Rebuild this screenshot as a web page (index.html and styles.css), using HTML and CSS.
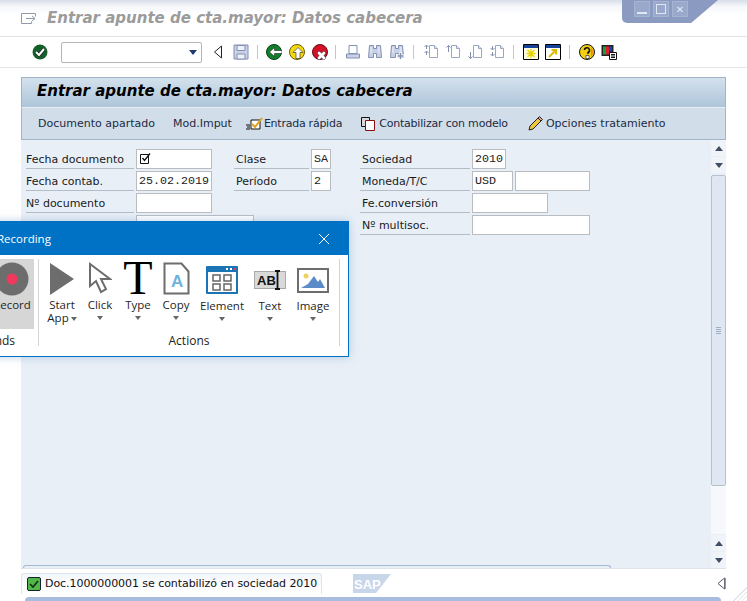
FILE: index.html
```html
<!DOCTYPE html>
<html lang="es">
<head>
    <meta charset="UTF-8">
    <meta name="viewport" content="width=device-width, initial-scale=1.0">
    <title>Entrar apunte de cta.mayor</title>
    <link rel="stylesheet" href="styles.css">
</head>
<body>
    <svg class="Hidden" width="0" height="0">
        <symbol id="page" viewBox="0 0 16 16">
            <path d="M6.500 1.500h5l3 3v9h-8z" fill="#fff" stroke="#9aa6c4"/>
            <path d="M11.500 1.500v3h3" fill="#dfe5f2" stroke="#9aa6c4"/>
        </symbol>
        <symbol id="binoc" viewBox="0 0 16 16">
            <path d="M2.500 1.500h4v3h3v-3h4l1 12h-5v-4h-3v4h-5z" fill="#c9d1e6" stroke="#8290b4"/>
            <path d="M4 3v6M12 3v6" stroke="#eef1f8"/>
        </symbol>
    </svg>

    <header class="Head">
        <svg class="Head__icon" width="16" height="12" viewBox="0 0 16 12"><path d="M.5 1.500h14M.5 1.500v10h10M10.500 11.500v-2M14.500 1.500v3M5 6.500h9l-3-2.500M14 6.500l-3 2.500" fill="none" stroke="#8f99a8"/></svg>
        <h1 class="Head__title">Entrar apunte de cta.mayor: Datos cabecera</h1>
    </header>

    <div class="Tools">
        <svg class="Tools__ico" viewBox="0 0 16 16"><circle cx="8" cy="8" r="7.500" fill="#14602a"/><path d="M4 8l3 3 5-6" fill="none" stroke="#222" stroke-width="3.500"/><path d="M4 8l3 3 5-6" fill="none" stroke="#fff" stroke-width="2"/></svg>
        <div class="Combo"><span class="Combo__arrow"></span></div>
        <svg class="Tools__nav" viewBox="0 0 10 16"><path d="M8.500 2v12L1.500 8z" fill="#fff" stroke="#222"/></svg>
        <svg class="Tools__ico Tools__ico--save" viewBox="0 0 16 16"><path d="M1 1h14v14H1z" fill="#c9d1e6" stroke="#8290b4"/><path d="M4 1.500h8v5H4zM4 10h8v5H4z" fill="#eef1f8" stroke="#8290b4"/></svg>
        <span class="Tools__sep Tools__sep--first"></span>
        <div class="Tools__group Tools__group--wide">
            <svg class="Tools__ico" viewBox="0 0 16 16"><circle cx="8" cy="8" r="7.500" fill="#10802a" stroke="#0b3d18"/><path d="M16 6.500H8.500V3.500L3.500 8l5 4.500v-3H16z" fill="#fff" stroke="#222" stroke-width=".6"/></svg>
            <svg class="Tools__ico" viewBox="0 0 16 16"><circle cx="8" cy="8" r="7.500" fill="#f6d90f" stroke="#6d5b00"/><path d="M9 3.500l5 5h-3v6H7v-6H4z" fill="#fff" stroke="#222" stroke-width=".6"/></svg>
            <svg class="Tools__ico" viewBox="0 0 16 16"><circle cx="8" cy="8" r="7.500" fill="#d3122a" stroke="#6a0a14"/><path d="M7 7l2.500 2 2.500-2 2 2-2 2.500 2 2.500-2 2-2.500-2L7 16l-2-2 2-2.500L5 9z" fill="#fff" stroke="#222" stroke-width=".5"/></svg>
        </div>
        <span class="Tools__sep Tools__sep--near"></span>
        <div class="Tools__group">
            <svg class="Tools__ico" viewBox="0 0 16 16"><path d="M4 1.500h8v8H4z" fill="#fff" stroke="#8290b4"/><path d="M1.500 10h13v4h-13z" fill="#c9d1e6" stroke="#8290b4"/></svg>
            <svg class="Tools__ico"><use href="#binoc"/></svg>
            <svg class="Tools__ico" viewBox="0 0 16 16"><use href="#binoc" width="16" height="16"/><path d="M11.500 8.500v7M8 12h7" stroke="#fff" stroke-width="3"/><path d="M11.500 9v6M8.500 12h6" stroke="#8290b4" stroke-width="1.500"/></svg>
        </div>
        <span class="Tools__sep"></span>
        <div class="Tools__group">
            <svg class="Tools__ico" viewBox="0 0 16 16"><use href="#page" width="16" height="16"/><path d="M3.500 5V1.500M1.500 3l2-2 2 2M3.500 11V7.500M1.500 9l2-2 2 2" fill="none" stroke="#8290b4"/></svg>
            <svg class="Tools__ico" viewBox="0 0 16 16"><use href="#page" width="16" height="16"/><path d="M3.500 8V1.500M1.500 3.500l2-2 2 2" fill="none" stroke="#8290b4"/></svg>
            <svg class="Tools__ico" viewBox="0 0 16 16"><use href="#page" width="16" height="16"/><path d="M3.500 8v6.500M1.500 12.500l2 2 2-2" fill="none" stroke="#8290b4"/></svg>
            <svg class="Tools__ico" viewBox="0 0 16 16"><use href="#page" width="16" height="16"/><path d="M3.500 2v3.500M1.500 4l2 2 2-2M3.500 8v3.500M1.500 10l2 2 2-2" fill="none" stroke="#8290b4"/></svg>
        </div>
        <span class="Tools__sep"></span>
        <div class="Tools__group">
            <svg class="Tools__ico" viewBox="0 0 16 16"><path d="M.5.500h15v15H.5z" fill="#fffde0" stroke="#000"/><path d="M1 1h14v3H1z" fill="#15439b"/><path d="M8 5v9M3.500 9.500h9M4.500 6l7 7M11.500 6l-7 7" stroke="#e8d400" stroke-width="1.300"/></svg>
            <svg class="Tools__ico" viewBox="0 0 16 16"><path d="M.5.500h15v15H.5z" fill="#fff" stroke="#000"/><path d="M1 1h14v3H1z" fill="#15439b"/><path d="M4 13l6-6M6.500 6H11v4.500" fill="none" stroke="#d8c000" stroke-width="2"/></svg>
        </div>
        <span class="Tools__sep"></span>
        <div class="Tools__group">
            <svg class="Tools__ico" viewBox="0 0 16 16"><circle cx="8" cy="8" r="7.500" fill="#f4d010" stroke="#111"/><path d="M12 3a7 7 0 0 1 0 10z" fill="#ee8a1c"/><path d="M5.500 6a2.500 2.500 0 1 1 3.500 2.500V10" fill="none" stroke="#111" stroke-width="1.600"/><path d="M7 11.500h3v3H7z" fill="#fff" stroke="#111" stroke-width=".6"/></svg>
            <svg class="Tools__ico" viewBox="0 0 16 16"><path d="M.5 1h12v11H.5z" fill="#222"/><path d="M2 2.500h3v8H2z" fill="#1d9a3a"/><path d="M5 2.500h3v8H5z" fill="#d8202a"/><path d="M8 2.500h3v5H8z" fill="#1c3fb8"/><path d="M8.500 8.500h7v7h-7z" fill="#fff" stroke="#111"/><path d="M10 10.500h4M10 12h4M10 13.500h4" stroke="#111"/></svg>
        </div>
    </div>

    <main class="Panel">
        <h2 class="Panel__title">Entrar apunte de cta.mayor: Datos cabecera</h2>
        <nav class="Actions">
            <span class="Actions__item">Documento apartado</span>
            <span class="Actions__item Actions__item--mod">Mod.Imput</span>
            <span class="Actions__item Actions__item--fast">
                <svg width="17" height="16" viewBox="0 0 17 16"><path d="M5 4h9v9H5z" fill="#fff" stroke="#111"/><path d="M6 8l3 3 7-9" fill="none" stroke="#e0a020" stroke-width="2"/><path d="M0 9h4M1 11h3M0 13h4" stroke="#111"/></svg>Entrada rápida</span>
            <span class="Actions__item Actions__item--model">
                <svg width="15" height="14" viewBox="0 0 15 14"><path d="M.5.500h8v9h-8z" fill="#d9d9d9" stroke="#111"/><path d="M4.500 3.500h9v10h-9z" fill="#fff" stroke="#8a1010"/></svg>Contabilizar con modelo</span>
            <span class="Actions__item Actions__item--opts">
                <svg width="15" height="15" viewBox="0 0 15 15"><path d="M1 14l1-4 8-8 3 3-8 8z" fill="#f2c63a" stroke="#222"/><path d="M10 2l1.500-1.500 3 3L13 5z" fill="#e8a0a0" stroke="#222"/></svg>Opciones tratamiento</span>
        </nav>

        <div class="Body">
            <div class="Form">
                <div class="Form__col Form__col--left">
                    <div class="Row"><label class="Row__label Row__label--w1">Fecha documento</label><span class="Field Field--date"><svg width="12" height="11" viewBox="0 0 12 11"><path d="M.5 1.500h8v9h-8z" fill="none" stroke="#111"/><path d="M2.500 5l2 2.500L10 .5" fill="none" stroke="#111" stroke-width="1.300"/></svg></span></div>
                    <div class="Row"><label class="Row__label Row__label--w1">Fecha contab.</label><span class="Field Field--date">25.02.2019</span></div>
                    <div class="Row"><label class="Row__label Row__label--w1">Nº documento</label><span class="Field Field--date"></span></div>
                    <div class="Row"><label class="Row__label Row__label--w1"></label><span class="Field Field--wide"></span></div>
                </div>
                <div class="Form__col Form__col--mid">
                    <div class="Row"><label class="Row__label Row__label--w2">Clase</label><span class="Field Field--tiny">SA</span></div>
                    <div class="Row"><label class="Row__label Row__label--w2">Período</label><span class="Field Field--tiny">2</span></div>
                </div>
                <div class="Form__col Form__col--right">
                    <div class="Row"><label class="Row__label Row__label--w3">Sociedad</label><span class="Field Field--soc">2010</span></div>
                    <div class="Row"><label class="Row__label Row__label--w3">Moneda/T/C</label><span class="Field Field--cur">USD</span><span class="Field Field--rate"></span></div>
                    <div class="Row"><label class="Row__label Row__label--w3">Fe.conversión</label><span class="Field Field--date"></span></div>
                    <div class="Row"><label class="Row__label Row__label--w3">Nº multisoc.</label><span class="Field Field--long"></span></div>
                </div>
            </div>

            <div class="Scroll">
                <span class="Scroll__btn"><i class="Up"></i></span>
                <span class="Scroll__btn"><i class="Down"></i></span>
                <div class="Scroll__track">
                    <div class="Scroll__thumb"><span class="Scroll__grip"></span></div>
                </div>
                <span class="Scroll__btn"><i class="Up"></i></span>
                <span class="Scroll__btn"><i class="Down"></i></span>
            </div>
            <span class="Body__tab"></span>
        </div>
    </main>

    <footer class="Status">
        <div class="Status__msg">
            <svg width="14" height="14" viewBox="0 0 14 14"><rect x=".5" y=".5" width="13" height="13" rx="1.500" fill="#52b848" stroke="#123"/><path d="M3 7l3 3 5-6" fill="none" stroke="#10301a" stroke-width="1.600"/></svg>
            <span>Doc.1000000001 se contabilizó en sociedad 2010</span>
        </div>
        <svg class="Status__logo" width="39" height="19" viewBox="0 0 39 19"><path d="M0 0h38L23 19H0z" fill="#c8d6ea"/><text x="1" y="15" class="Status__sap">SAP</text></svg>
        <svg class="Status__nav" width="9" height="13" viewBox="0 0 9 13"><path d="M7.500 1v11L1 6.500z" fill="#fff" stroke="#556"/><path d="M8 1v11" stroke="#778" stroke-width="1.500"/></svg>
    </footer>
    <div class="Strip"></div>
    <span class="Grip"></span>

    <div class="WinBtns">
        <span class="WinBtns__btn"><i class="Min"></i></span>
        <span class="WinBtns__btn"><i class="Max"></i></span>
        <span class="WinBtns__btn WinBtns__btn--x">✕</span>
    </div>

    <section class="Rec">
        <div class="Rec__bar">
            <span>Recording</span>
            <svg width="12" height="12" viewBox="0 0 12 12"><path d="M1 1l10 10M11 1L1 11" stroke="#fff" stroke-width="1"/></svg>
        </div>
        <div class="Rec__body">
            <div class="Group Group--cmds">
                <div class="Group__items">
                    <div class="Tool Tool--active">
                        <svg width="34" height="34" viewBox="0 0 34 34"><circle cx="17" cy="17" r="16.500" fill="#6d6d6d"/><circle cx="17" cy="17" r="5.500" fill="#ef3a5d"/></svg>
                        <span class="Tool__text">Record</span>
                    </div>
                </div>
                <span class="Group__name">Commands</span>
            </div>
            <div class="Group Group--acts">
                <div class="Group__items">
                    <div class="Tool Tool--start">
                        <svg width="24" height="34" viewBox="0 0 24 34"><path d="M0 1l24 16L0 33z" fill="#6d6d6d"/></svg>
                        <span class="Tool__text">Start</span>
                        <span class="Tool__text">App<i class="Caret Caret--inline"></i></span>
                    </div>
                    <div class="Tool Tool--click">
                        <svg width="24" height="34" viewBox="0 0 24 34"><path d="M2 2v22l6-5 5 11 5-3-5-10h9z" fill="#fff" stroke="#6d6d6d" stroke-width="2"/></svg>
                        <span class="Tool__text">Click</span>
                        <i class="Caret"></i>
                    </div>
                    <div class="Tool Tool--type">
                        <span class="Tool__glyph">T</span>
                        <span class="Tool__text">Type</span>
                        <i class="Caret"></i>
                    </div>
                    <div class="Tool Tool--copy">
                        <svg width="27" height="34" viewBox="0 0 27 34"><path d="M1.500 1.500h17l7 8v22h-24z" fill="#fff" stroke="#6d6d6d" stroke-width="2"/><text x="8" y="25" class="Tool__a">A</text></svg>
                        <span class="Tool__text">Copy</span>
                        <i class="Caret"></i>
                    </div>
                    <div class="Tool Tool--low Tool--element">
                        <svg width="32" height="28" viewBox="0 0 32 28"><rect width="32" height="28" rx="1" fill="#1b75b5"/><rect x="2" y="6" width="28" height="20" fill="#fff"/><path d="M7 9h7v6H7zM18 9h7v6h-7zM7 18h7v6H7zM18 18h7v6h-7z" fill="#fff" stroke="#666" stroke-width="1.500"/><path d="M20 3h2M24 3h2" stroke="#fff" stroke-width="2"/><path d="M28 3h2" stroke="#ef3a5d" stroke-width="2"/></svg>
                        <span class="Tool__text">Element</span>
                        <i class="Caret"></i>
                    </div>
                    <div class="Tool Tool--low Tool--txt">
                        <svg width="32" height="28" viewBox="0 0 32 28"><rect x=".5" y="5.500" width="31" height="17" fill="#d9d9d9" stroke="#aaa"/><text x="3" y="19" class="Tool__ab">AB</text><path d="M21 5h5M21 23h5M23.500 5v18" stroke="#111" stroke-width="1.800"/></svg>
                        <span class="Tool__text">Text</span>
                        <i class="Caret"></i>
                    </div>
                    <div class="Tool Tool--low Tool--image">
                        <svg width="32" height="28" viewBox="0 0 32 28"><rect x="1" y="3" width="30" height="23" fill="#fff" stroke="#6d6d6d" stroke-width="2"/><circle cx="9" cy="10" r="2.500" fill="#f0d060"/><path d="M4 22l7-4 6-8 4 6 2-3 5 9z" fill="#5b8bc9"/></svg>
                        <span class="Tool__text">Image</span>
                        <i class="Caret"></i>
                    </div>
                </div>
                <span class="Group__name">Actions</span>
            </div>
        </div>
    </section>
</body>
</html>
```

FILE: styles.css
```css
* {
    box-sizing: border-box;
}

html,
body {
    height: 100%;
}

body {
    margin: 0;
    height: 601px;
    overflow: hidden;
    position: relative;
    display: flex;
    flex-direction: column;
    background: #fff;
    font-family: 'DejaVu Sans', sans-serif;
    font-size: 11px;
    color: #1c2a44;
}

.Hidden {
    display: none;
}

.Head {
    height: 37px;
    flex: none;
    display: flex;
    align-items: center;
    padding-left: 21px;
    gap: 10px;
    background: linear-gradient(#d8dde8 0, #f4f6fa 6px, #fff 14px);
    border-bottom: 1px solid #dfe3e8;
}

.Head__title {
    margin: 0;
    font-size: 15px;
    font-style: italic;
    font-weight: bold;
    color: #9b9b9b;
}

.Tools {
    height: 31px;
    flex: none;
    display: flex;
    align-items: center;
    padding-left: 32px;
    border-bottom: 1px solid #e2e5ea;
}

.Tools__group {
    display: flex;
    gap: 6px;
}

.Tools__group--wide {
    gap: 7px;
}

.Tools__ico {
    width: 16px;
    height: 16px;
    flex: none;
}

.Tools__ico--save {
    margin-left: 10px;
}

.Tools__nav {
    width: 10px;
    height: 16px;
    margin-left: 11px;
}

.Tools__sep {
    width: 1px;
    height: 14px;
    margin: 0 9px 0 8px;
    background: #b9c8dc;
}

.Tools__sep--first {
    margin-right: 8px;
}

.Tools__sep--near {
    margin-left: 7px;
}

.Combo {
    width: 141px;
    height: 21px;
    margin-left: 13px;
    background: #fff;
    border: 1px solid #b4b4b4;
    border-radius: 2px;
    position: relative;
}

.Combo__arrow {
    position: absolute;
    right: 4px;
    top: 7px;
    border: 4px solid transparent;
    border-top: 5px solid #1f3a6e;
    border-bottom: 0;
}

.Panel {
    margin: 9px 21px 0 21px;
    flex: 1;
    min-height: 0;
    display: flex;
    flex-direction: column;
}

.Panel__title {
    margin: 0;
    height: 31px;
    flex: none;
    line-height: 26px;
    padding-left: 15px;
    font-size: 15px;
    font-style: italic;
    font-weight: bold;
    color: #000;
    background: linear-gradient(#d3e1ec, #aec5da);
    border: 1px solid #a0b4c8;
    border-bottom: 1px solid #e6eef5;
}

.Actions {
    height: 32px;
    flex: none;
    display: flex;
    align-items: center;
    padding-left: 16px;
    background: #d1dee9;
    border: 1px solid #a0b4c8;
    border-top: 0;
}

.Actions__item--mod {
    margin-left: 18px;
}

.Actions__item--fast,
.Actions__item--model,
.Actions__item--opts {
    display: flex;
    align-items: center;
    gap: 3px;
}

.Actions__item--fast {
    gap: 1px;
    margin-left: 14px;
    letter-spacing: -.25px;
}

.Actions__item--model {
    margin-left: 19px;
    letter-spacing: -.2px;
}

.Actions__item--opts {
    margin-left: 20px;
}

.Body {
    flex: 1;
    min-height: 0;
    display: flex;
    justify-content: space-between;
    position: relative;
    background: #e8eff7;
    border-bottom: 1px solid #dfe4ea;
}

.Form {
    display: flex;
    padding: 9px 0 0 5px;
    color: #1a1a1a;
}

.Form__col {
    display: flex;
    flex-direction: column;
    gap: 2px;
}

.Form__col--left {
    width: 186px;
}

.Form__col--mid {
    margin-left: 22px;
}

.Form__col--right {
    margin-left: 29px;
}

.Row {
    display: flex;
    height: 20px;
    gap: 2px;
}

.Row__label {
    height: 20px;
    line-height: 21px;
    border-bottom: 1px solid #b3bcc7;
    flex: none;
}

.Row__label--w1 {
    width: 108px;
}

.Row__label--w2 {
    width: 75px;
    padding-left: 2px;
}

.Row__label--w3 {
    width: 110px;
    padding-left: 2px;
}

.Field {
    height: 20px;
    flex: none;
    background: #fff;
    border: 1px solid #b9bdc2;
    font-family: 'Liberation Mono', monospace;
    font-size: 11.7px;
    line-height: 18px;
    padding-left: 2px;
    color: #222;
}

.Field svg {
    display: block;
    margin: 3px 0 0 1px;
}

.Field--date {
    width: 76px;
}

.Field--wide {
    width: 118px;
}

.Field--tiny {
    width: 20px;
}

.Field--soc {
    width: 34px;
}

.Field--cur {
    width: 41px;
}

.Field--rate {
    width: 75px;
}

.Field--long {
    width: 118px;
}

.Scroll {
    width: 15px;
    display: flex;
    flex-direction: column;
    gap: 1px;
}

.Scroll__btn {
    height: 16px;
    flex: none;
    background: #f0f4f9;
    display: flex;
    align-items: center;
    justify-content: center;
}

.Up,
.Down {
    border: 4px solid transparent;
    border-top: 0;
    border-bottom: 5px solid #3f4f63;
}

.Down {
    border-top: 5px solid #3f4f63;
    border-bottom: 0;
}

.Scroll__track {
    flex: 1;
    margin-top: 1px;
    background: #f6f8fb;
}

.Scroll__thumb {
    height: 311px;
    background: #dfe8f2;
    border: 1px solid #b6c0cc;
    border-radius: 2px;
    display: flex;
    align-items: center;
    justify-content: center;
}

.Scroll__grip {
    width: 5px;
    height: 7px;
    background: repeating-linear-gradient(#9fb0c4 0 1px, transparent 1px 2px);
}

.Body__tab {
    position: absolute;
    left: 2px;
    bottom: 0;
    width: 588px;
    height: 3px;
    border-top: 1px solid #a5b9d2;
    border-left: 1px solid #a5b9d2;
    border-right: 1px solid #a5b9d2;
    border-radius: 3px 3px 0 0;
}

.Status {
    height: 28px;
    flex: none;
    display: flex;
    align-items: center;
    padding: 0 21px;
}

.Status__msg {
    width: 301px;
    height: 21px;
    display: flex;
    align-items: center;
    gap: 4px;
    padding-left: 5px;
    color: #111;
    white-space: nowrap;
    letter-spacing: -.06px;
    background: linear-gradient(#f4f7fb, #fff);
    border: 1px solid #dfe5ee;
    border-bottom: 0;
    border-radius: 3px 3px 0 0;
}

.Status__msg svg {
    flex: none;
}

.Status__logo {
    margin-left: 31px;
}

.Status__sap {
    font-family: 'Liberation Sans', sans-serif;
    font-size: 13px;
    font-weight: bold;
    fill: #fff;
}

.Status__nav {
    margin-left: auto;
}

.Strip {
    height: 4px;
    flex: none;
    margin: 0 26px 0 25px;
    background: #a8bcdf;
    border-radius: 6px 6px 0 0;
}

.Grip {
    position: absolute;
    right: 0;
    bottom: 0;
    width: 18px;
    height: 16px;
    background: repeating-linear-gradient(135deg, transparent 0 2px, #e2e6ec 2px 3px);
    clip-path: polygon(100% 0, 100% 100%, 0 100%);
}

.WinBtns {
    position: absolute;
    top: 0;
    right: 29px;
    width: 96px;
    height: 23px;
    padding-left: 12px;
    display: flex;
    gap: 3px;
    background: #8a9ac0;
    clip-path: polygon(0 0, 100% 0, 72% 100%, 0 100%);
    border-radius: 0 0 0 5px;
}

.WinBtns__btn {
    width: 16px;
    height: 16px;
    margin-top: 1px;
    background: #99a9cc;
    border: 1px solid #a6b4d2;
    display: flex;
    align-items: center;
    justify-content: center;
    color: #e4eaf6;
    font-size: 10px;
    font-weight: bold;
}

.Min {
    width: 10px;
    height: 2px;
    margin-top: 8px;
    background: #dfe6f4;
}

.Max {
    width: 10px;
    height: 10px;
    border: 1px solid #dfe6f4;
}

.Rec {
    position: absolute;
    left: -100px;
    top: 221px;
    width: 449px;
    height: 136px;
    display: flex;
    flex-direction: column;
    background: #fff;
    border: 1px solid #0072c6;
    box-shadow: 0 0 8px rgba(120, 160, 200, .5);
    font-family: 'Open Sans', sans-serif;
    font-size: 11.5px;
    color: #1f1f1f;
}

.Rec__bar {
    height: 33px;
    flex: none;
    display: flex;
    align-items: center;
    justify-content: space-between;
    padding: 0 18px 0 96px;
    background: #0072c6;
    color: #fff;
    font-size: 11.5px;
}

.Rec__body {
    flex: 1;
    display: flex;
    padding-top: 4px;
}

.Group {
    display: flex;
    flex-direction: column;
    align-items: center;
    height: 87px;
    border-right: 1px solid #d4d4d4;
}

.Group--cmds {
    width: 138px;
    padding-right: 4px;
    align-items: flex-end;
}

.Group--acts {
    width: 301px;
}

.Group__items {
    height: 70px;
    flex: none;
    display: flex;
}

.Group--acts .Group__items {
    width: 100%;
    padding-left: 11px;
}

.Group__name {
    flex: none;
    font-size: 12px;
    line-height: 16px;
    margin-top: 4px;
    color: #222;
}

.Group--cmds .Group__name {
    width: 100%;
    padding-left: 50px;
}

.Tool {
    display: flex;
    flex-direction: column;
    align-items: center;
    line-height: 13px;
    padding-top: 3px;
    white-space: nowrap;
}

.Tool svg {
    flex: none;
    margin-bottom: 2px;
}

.Tool--active {
    width: 44px;
    background: #d6d6d6;
}

.Tool--start {
    width: 24px;
}

.Tool--click {
    width: 30px;
    margin-left: 11px;
}

.Tool--type {
    width: 30px;
    margin-left: 8px;
}

.Tool--copy {
    width: 30px;
    margin-left: 8px;
}

.Tool--low {
    width: 44px;
    padding-top: 7px;
}

.Tool--element {
    margin-left: 9px;
}

.Tool--txt {
    margin-left: 4px;
}

.Tool--image {
    margin-left: -1px;
}

.Tool--low .Tool__text {
    margin-top: 3px;
}

.Tool__glyph {
    height: 36px;
    flex: none;
    font-family: 'Liberation Serif', serif;
    font-size: 48px;
    line-height: 32px;
    color: #000;
}

.Tool__a {
    font-family: 'Liberation Sans', sans-serif;
    font-size: 17px;
    font-weight: bold;
    fill: #6db3e0;
}

.Tool__ab {
    font-family: 'Liberation Sans', sans-serif;
    font-size: 13px;
    font-weight: bold;
    fill: #111;
}

.Caret {
    display: block;
    width: 0;
    margin-top: 5px;
    border: 3px solid transparent;
    border-top: 4px solid #666;
    border-bottom: 0;
}

.Caret--inline {
    display: inline-block;
    margin: 0 0 1px 2px;
}
```
